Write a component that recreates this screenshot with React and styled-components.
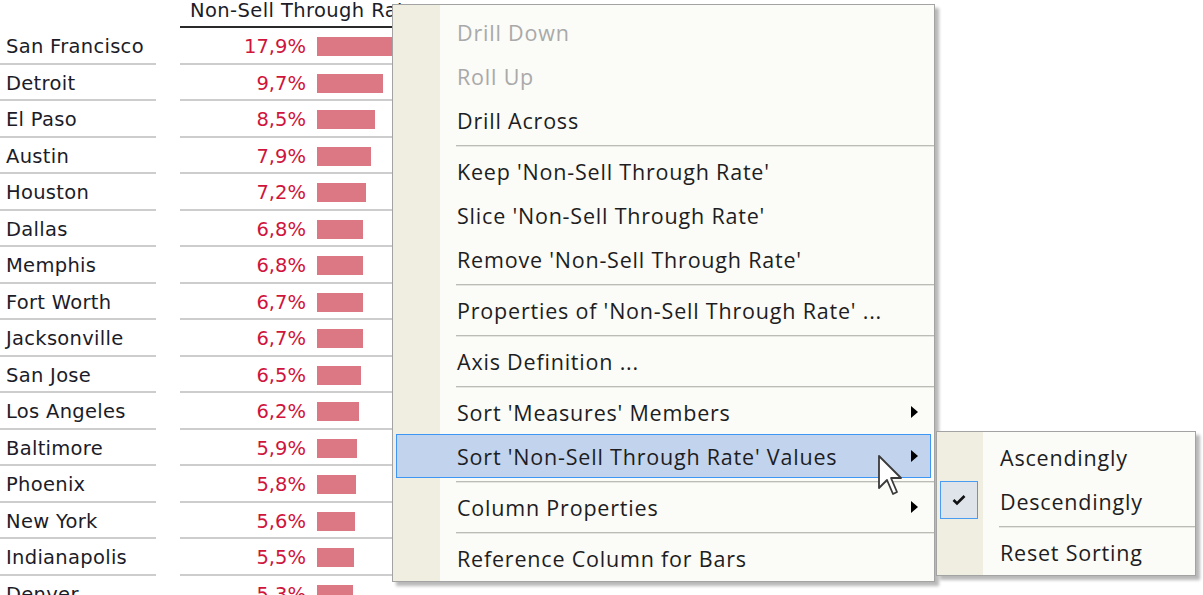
import React from "react";
import styled, { createGlobalStyle } from "styled-components";

const GlobalStyle = createGlobalStyle`
  html, body {
    margin: 0;
    padding: 0;
    background: #ffffff;
  }
  body {
    width: 1203px;
    height: 595px;
    overflow: hidden;
  }
`;

const rows = [
  ["San Francisco", 17.9],
  ["Detroit", 9.7],
  ["El Paso", 8.5],
  ["Austin", 7.9],
  ["Houston", 7.2],
  ["Dallas", 6.8],
  ["Memphis", 6.8],
  ["Fort Worth", 6.7],
  ["Jacksonville", 6.7],
  ["San Jose", 6.5],
  ["Los Angeles", 6.2],
  ["Baltimore", 5.9],
  ["Phoenix", 5.8],
  ["New York", 5.6],
  ["Indianapolis", 5.5],
  ["Denver", 5.3],
];

const Page = styled.div`
  position: relative;
  width: 1203px;
  height: 595px;
  overflow: hidden;
  font-family: "DejaVu Sans", Verdana, sans-serif;
`;

const Table = styled.div`
  display: flex;
  flex-direction: column;
`;

const HeaderRow = styled.div`
  display: flex;
  height: 28px;
  box-sizing: border-box;
  padding-left: 180px;
`;

const HeaderCell = styled.div`
  width: 420px;
  box-sizing: border-box;
  border-bottom: 2px solid #2a2a2a;
  padding-left: 10px;
  font-size: 19.5px;
  letter-spacing: 0.4px;
  line-height: 22px;
  color: #1c1c28;
  white-space: nowrap;
`;

const Row = styled.div`
  display: flex;
  gap: 24px;
  height: 36.5px;
`;

const CityCell = styled.div`
  width: 156px;
  box-sizing: border-box;
  border-bottom: 2px solid #cdcdcd;
  padding: 3px 0 0 6px;
  display: flex;
  align-items: center;
  font-size: 19.5px;
  letter-spacing: 0.3px;
  color: #1c1c28;
  white-space: nowrap;
`;

const ValueCell = styled.div`
  width: 420px;
  box-sizing: border-box;
  border-bottom: 2px solid #cdcdcd;
  padding-top: 3px;
  display: flex;
  align-items: center;
  gap: 11px;
`;

const Value = styled.span`
  width: 126px;
  text-align: right;
  font-size: 19.5px;
  color: #d0143c;
`;

const Bar = styled.div`
  height: 19px;
  background: #dc7884;
`;

const Menu = styled.div`
  position: absolute;
  left: ${(p) => p.$left}px;
  top: ${(p) => p.$top}px;
  width: ${(p) => p.$width}px;
  box-sizing: border-box;
  border: 1px solid #a3a3a3;
  padding: ${(p) => p.$padTop}px 0 1px 0;
  background: linear-gradient(
    to right,
    #f0ede1 0,
    #f0ede1 ${(p) => p.$gutter}px,
    #fbfbf7 ${(p) => p.$gutter}px
  );
  box-shadow: 4px 4px 3px rgba(0, 0, 0, 0.28);
  font-family: "Open Sans", "Noto Sans", sans-serif;
  font-size: 21.5px;
  letter-spacing: 0.8px;
`;

const Item = styled.div`
  position: relative;
  height: 44px;
  box-sizing: border-box;
  margin: 0 3px;
  padding-left: ${(p) => p.$indent}px;
  display: flex;
  align-items: center;
  color: ${(p) => (p.$disabled ? "#a9a9a9" : "#1d1d22")};
  border: 1px solid ${(p) => (p.$active ? "#3d95f5" : "transparent")};
  background: ${(p) => (p.$active ? "#c2d3ee" : "transparent")};
  white-space: nowrap;
`;

const Separator = styled.div`
  height: 7px;
  display: flex;
  align-items: center;
  padding-left: ${(p) => p.$indent}px;
  &::after {
    content: "";
    flex: 1;
    height: 1px;
    background: #bcbcb6;
    border-bottom: 1px solid #e6e6e0;
  }
`;

const Arrow = styled.span`
  position: absolute;
  right: 12px;
  top: 50%;
  margin-top: -6px;
  width: 0;
  height: 0;
  border-left: 7px solid #000;
  border-top: 6px solid transparent;
  border-bottom: 6px solid transparent;
`;

const CheckBox = styled.span`
  position: absolute;
  left: -1px;
  top: 1px;
  width: 38px;
  height: 38px;
  box-sizing: border-box;
  border: 1px solid #4b9bf2;
  background: #dfe4ea;
  display: flex;
  align-items: center;
  justify-content: center;
`;

const Cursor = styled.svg`
  position: absolute;
  left: 877px;
  top: 454px;
`;

const mainItems = [
  { label: "Drill Down", disabled: true },
  { label: "Roll Up", disabled: true },
  { label: "Drill Across" },
  "sep",
  { label: "Keep 'Non-Sell Through Rate'" },
  { label: "Slice 'Non-Sell Through Rate'" },
  { label: "Remove 'Non-Sell Through Rate'" },
  "sep",
  { label: "Properties of 'Non-Sell Through Rate' ..." },
  "sep",
  { label: "Axis Definition ..." },
  "sep",
  { label: "Sort 'Measures' Members", sub: true },
  { label: "Sort 'Non-Sell Through Rate' Values", sub: true, active: true },
  "sep",
  { label: "Column Properties", sub: true },
  "sep",
  { label: "Reference Column for Bars" },
];

const subItems = [
  { label: "Ascendingly" },
  { label: "Descendingly", checked: true },
  "sep",
  { label: "Reset Sorting" },
];

function MenuList({ items, indent, sepIndent }) {
  return items.map((it, i) =>
    it === "sep" ? (
      <Separator key={i} $indent={sepIndent} />
    ) : (
      <Item key={i} $indent={indent} $disabled={it.disabled} $active={it.active}>
        {it.checked && (
          <CheckBox>
            <svg width="14" height="12" viewBox="0 0 14 12">
              <polyline points="1.5,6 5,9.5 12.5,2" fill="none" stroke="#111" strokeWidth="2.6" />
            </svg>
          </CheckBox>
        )}
        {it.label}
        {it.sub && <Arrow />}
      </Item>
    )
  );
}

export default function App() {
  return (
    <Page>
      <GlobalStyle />
      <Table>
        <HeaderRow>
          <HeaderCell>Non-Sell Through Rate</HeaderCell>
        </HeaderRow>
        {rows.map(([city, v]) => (
          <Row key={city}>
            <CityCell>{city}</CityCell>
            <ValueCell>
              <Value>{v.toFixed(1).replace(".", ",")}%</Value>
              <Bar style={{ width: `${Math.round(v * 6.8)}px` }} />
            </ValueCell>
          </Row>
        ))}
      </Table>

      <Menu $left={392} $top={4} $width={543} $gutter={47} $padTop={5}>
        <MenuList items={mainItems} indent={60} sepIndent={63} />
      </Menu>

      <Menu $left={936} $top={431} $width={260} $gutter={46} $padTop={3}>
        <MenuList items={subItems} indent={59} sepIndent={62} />
      </Menu>

      <Cursor width="28" height="42" viewBox="0 0 14 21">
        <path
          d="M1,1 L1,17 L5,13 L8,20 L10,19 L7,12 L12,12 Z"
          fill="#ffffff"
          stroke="#3a3a3a"
          strokeWidth="0.9"
          strokeLinejoin="round"
        />
      </Cursor>
    </Page>
  );
}
